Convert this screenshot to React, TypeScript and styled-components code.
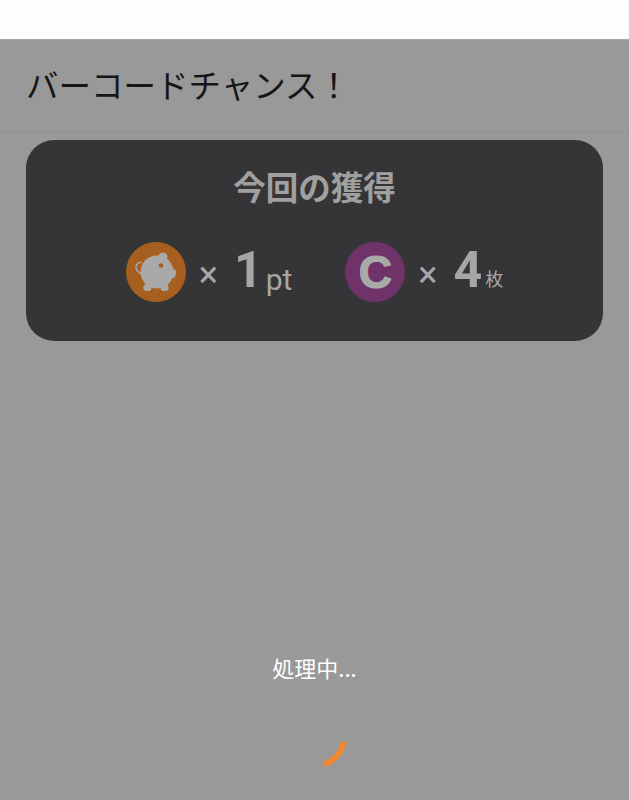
import styled, { createGlobalStyle } from 'styled-components';

const GlobalStyle = createGlobalStyle`
  html, body {
    margin: 0;
    padding: 0;
    background: #999999;
  }
  * {
    box-sizing: border-box;
  }
`;

const Page = styled.div`
  width: 629px;
  height: 800px;
  display: flex;
  flex-direction: column;
  overflow: hidden;
  background: #999999;
  font-family: Roboto, "Noto Sans CJK JP", sans-serif;
`;

const StatusBar = styled.div`
  height: 40px;
  flex: none;
  background: #fdfdfd;
  border-bottom: 1px solid #a8a8a8;
`;

const Header = styled.header`
  height: 93px;
  flex: none;
  display: flex;
  align-items: center;
  padding: 0 26px 4px;
  border-bottom: 1px solid #919191;
`;

const Title = styled.h1`
  margin: 0;
  font-family: "Noto Sans CJK JP", sans-serif;
  font-size: 32.5px;
  font-weight: 400;
  line-height: 1;
  color: #161616;
`;

const Card = styled.section`
  height: 201px;
  margin: 7px 26px 0;
  padding-top: 25px;
  flex: none;
  border-radius: 28px;
  background: #353436;
`;

const CardTitle = styled.h2`
  margin: 0;
  text-align: center;
  font-family: "Noto Sans CJK JP", sans-serif;
  font-size: 32.5px;
  font-weight: 700;
  line-height: 42px;
  color: #a0a0a0;
`;

const Rewards = styled.div`
  margin-top: 35px;
  display: flex;
  justify-content: center;
  gap: 53px;
`;

const Reward = styled.div`
  display: flex;
  align-items: center;
  color: #a6a6a6;
`;

const Coin = styled.div<{ $bg: string }>`
  width: 60px;
  height: 60px;
  flex: none;
  border-radius: 50%;
  background: ${props => props.$bg};
  display: flex;
  align-items: center;
  justify-content: center;
`;

const CoinLetter = styled.span`
  font-family: "Liberation Sans", sans-serif;
  font-size: 46px;
  font-weight: 700;
  line-height: 1;
  color: #a9a9a9;
  -webkit-text-stroke: 1.2px #a9a9a9;
`;

const Times = styled.span`
  margin: 6px 0 0 13px;
  font-size: 36px;
  line-height: 1;
`;

const Count = styled.span`
  margin: 0 0 4px 16px;
  font-size: 50px;
  font-weight: 700;
  line-height: 1;
`;

const Unit = styled.span<{ $size: number }>`
  margin: 16px 0 0 3px;
  font-size: ${props => props.$size}px;
  line-height: 1;
`;

const Processing = styled.div`
  margin-top: auto;
  padding-bottom: 30px;
  display: flex;
  flex-direction: column;
  align-items: center;
`;

const ProcessingText = styled.p`
  margin: 0 0 19px;
  font-family: "Noto Sans CJK JP", sans-serif;
  font-size: 22px;
  line-height: 28px;
  color: #ffffff;
`;

const PigIcon = () => (
  <svg width="60" height="60" viewBox="0 0 60 60" aria-hidden="true">
    <path
      d="M16.500 32C12 31 9.500 27.500 10 24.500 10.500 22 12.500 20.500 15 20.500"
      fill="none"
      stroke="#a9a9a9"
      strokeWidth="1.5"
      strokeLinecap="round"
    />
    <circle cx="31" cy="30" r="16.500" fill="#a9a9a9" />
    <circle cx="37" cy="15" r="4.500" fill="#a9a9a9" />
    <path d="M42 25l4.500 1.500 3.500 2c.5.5.5 1 .2 2l-1 4c-.3 1-1 1.500-2 1.500H42z" fill="#a9a9a9" />
    <rect x="17.500" y="42" width="8" height="7" rx="3" fill="#a9a9a9" />
    <rect x="34.500" y="42" width="8" height="7" rx="3" fill="#a9a9a9" />
    <circle cx="35" cy="23.500" r="2.300" fill="#a65f1f" />
  </svg>
);

const Spinner = () => (
  <svg width="70" height="70" viewBox="0 0 70 70" aria-hidden="true">
    <path d="M64 41.500A30.500 30.500 0 0 1 44 64.500" fill="none" stroke="#f5882a" strokeWidth="5.500" />
  </svg>
);

export default function App() {
  return (
    <>
      <GlobalStyle />
      <Page>
        <StatusBar />
        <Header>
          <Title>バーコードチャンス！</Title>
        </Header>
        <Card>
          <CardTitle>今回の獲得</CardTitle>
          <Rewards>
            <Reward>
              <Coin $bg="#a65f1f">
                <PigIcon />
              </Coin>
              <Times>×</Times>
              <Count>1</Count>
              <Unit $size={30}>pt</Unit>
            </Reward>
            <Reward>
              <Coin $bg="#6f3369">
                <CoinLetter>C</CoinLetter>
              </Coin>
              <Times>×</Times>
              <Count>4</Count>
              <Unit $size={18}>枚</Unit>
            </Reward>
          </Rewards>
        </Card>
        <Processing>
          <ProcessingText>処理中...</ProcessingText>
          <Spinner />
        </Processing>
      </Page>
    </>
  );
}
